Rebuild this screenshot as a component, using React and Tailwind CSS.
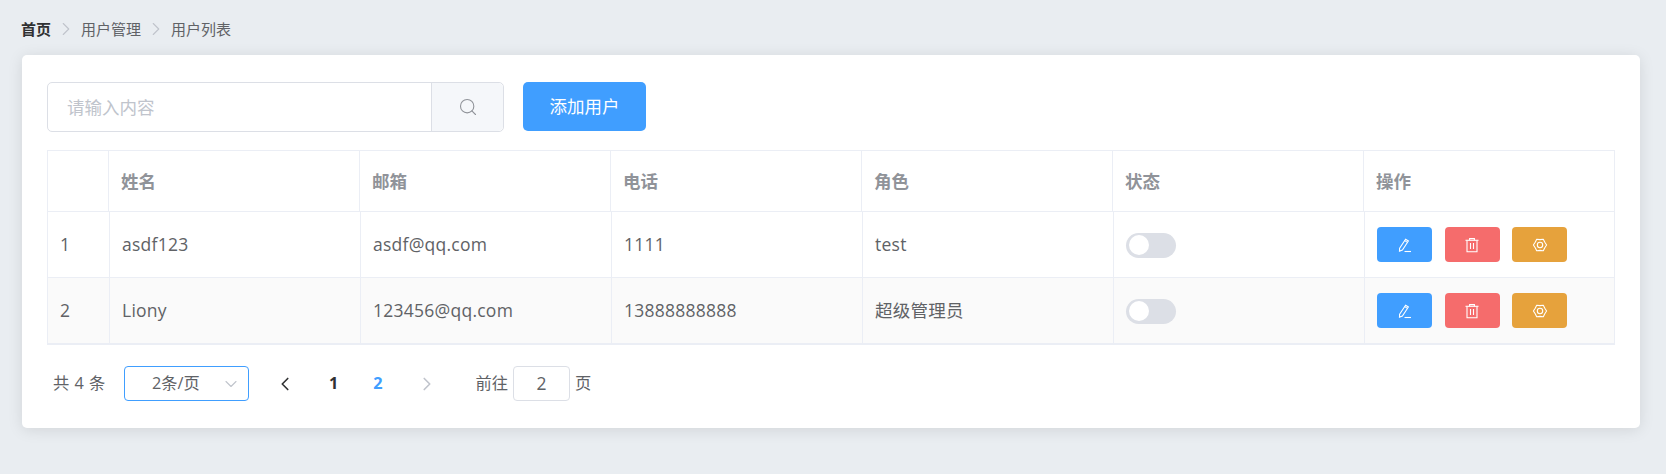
import { ChevronDown, ChevronLeft, ChevronRight, Search } from 'lucide-react'

const columns = ['', '姓名', '邮箱', '电话', '角色', '状态', '操作']

const users = [
  { id: 1, name: 'asdf123', email: 'asdf@qq.com', phone: '1111', role: 'test' },
  { id: 2, name: 'Liony', email: '123456@qq.com', phone: '13888888888', role: '超级管理员' },
]

const EditIcon = () => (
  <svg width="18" height="18" viewBox="0 0 18 18" fill="none" stroke="currentColor" strokeWidth="1.1">
    <path d="M3.6 12.2 9.6 3.2l2.8 1.8-6 9-2.9 1.1z" />
    <path d="M8.7 4.6l2.8 1.8" />
    <path d="M8.5 15.5h6.5" />
  </svg>
)

const TrashIcon = () => (
  <svg width="18" height="18" viewBox="0 0 18 18" fill="none" stroke="currentColor" strokeWidth="1.1">
    <path d="M2.5 4.3h13" />
    <path d="M6.6 4.2V2.6h4.8v1.6" />
    <path d="M4 4.5v11.2h10V4.5" />
    <path d="M7.5 7v6M10.5 7v6" />
  </svg>
)

const GearIcon = () => (
  <svg width="18" height="18" viewBox="0 0 18 18" fill="none" stroke="currentColor" strokeWidth="1.1" strokeLinejoin="round">
    <path d="M15.6 9 13.8 11.7 12.3 14.7 9 14.4 5.7 14.7 4.2 11.7 2.4 9 4.2 6.3 5.7 3.3 9 3.6 12.3 3.3 13.8 6.3z" />
    <circle cx="9" cy="9" r="2.7" />
  </svg>
)

function Switch() {
  return (
    <div className="mt-px flex h-[25px] w-[50px] items-center rounded-full bg-[#dcdfe6] pl-[3px]">
      <span className="h-[20px] w-[20px] rounded-full bg-white" />
    </div>
  )
}

function ActionButton({ color, children }) {
  return (
    <button className={`flex h-[35px] w-[55px] items-center justify-center rounded-[4px] text-white ${color}`}>
      {children}
    </button>
  )
}

function UserRow({ user, striped }) {
  const cell = 'flex w-[251px] items-center border-r border-[#ebeef5] pl-[12px] tracking-[0.25px]'
  return (
    <div className={`flex h-[66px] border-b border-[#ebeef5] text-[17.5px] text-[#606266] ${striped ? 'bg-[#fafafa]' : ''}`}>
      <div className="flex w-[62px] items-center border-r border-[#ebeef5] pl-[12px]">{user.id}</div>
      <div className={cell}>{user.name}</div>
      <div className={cell}>{user.email}</div>
      <div className={cell}>{user.phone}</div>
      <div className={cell}>{user.role}</div>
      <div className={cell}>
        <Switch />
      </div>
      <div className="flex flex-1 items-center gap-[12.5px] pl-[12px]">
        <ActionButton color="bg-[#409eff]">
          <EditIcon />
        </ActionButton>
        <ActionButton color="bg-[#f56c6c]">
          <TrashIcon />
        </ActionButton>
        <ActionButton color="bg-[#e6a23c]">
          <GearIcon />
        </ActionButton>
      </div>
    </div>
  )
}

export default function App() {
  return (
    <div className="h-[474px] bg-[#e9edf1] px-[21px] pt-[20px] font-['Open_Sans','Noto_Sans_CJK_SC',sans-serif]">
      <div className="flex h-[18px] items-center text-[15px] leading-[18px] text-[#606266]">
        <span className="font-bold text-[#303133]">首页</span>
        <ChevronRight className="mx-[4px] h-[22px] w-[22px] text-[#c0c4cc]" strokeWidth={1.2} />
        <span>用户管理</span>
        <ChevronRight className="mx-[4px] h-[22px] w-[22px] text-[#c0c4cc]" strokeWidth={1.2} />
        <span>用户列表</span>
      </div>

      <div className="ml-px mt-[17px] h-[373px] w-[1618px] rounded-[5px] bg-white px-[25px] pt-[27px] shadow-[0_2px_15px_rgba(0,0,0,0.1)]">
        <div className="flex gap-[19px]">
          <div className="flex h-[50px] w-[457px] rounded-[5px] border border-[#dcdfe6] text-[17.5px]">
            <div className="flex flex-1 items-center pl-[19px] text-[#c0c4cc]">请输入内容</div>
            <div className="flex w-[72px] items-center justify-center rounded-r-[5px] border-l border-[#dcdfe6] bg-[#f5f7fa] text-[#909399]">
              <Search className="h-[20px] w-[20px]" strokeWidth={1.3} />
            </div>
          </div>
          <button className="h-[49px] w-[123px] rounded-[5px] bg-[#409eff] text-[17.5px] text-white">添加用户</button>
        </div>

        <div className="mt-[18px] w-[1568px] border-x border-t border-[#ebeef5]">
          <div className="flex h-[61px] border-b border-[#ebeef5] text-[17.5px] font-bold text-[#909399]">
            {columns.map((title, i) => (
              <div
                key={i}
                className={`flex items-center ${i === 0 ? 'w-[61px] border-r border-[#ebeef5]' : i === 6 ? 'flex-1 pl-[12px]' : 'w-[251px] border-r border-[#ebeef5] pl-[12px]'}`}
              >
                {title}
              </div>
            ))}
          </div>
          {users.map((user, i) => (
            <UserRow key={user.id} user={user} striped={i === 1} />
          ))}
          <div className="h-px bg-[#ebeef5]" />
        </div>

        <div className="mt-[21px] flex h-[35px] items-center text-[16.25px] text-[#606266]">
          <span className="ml-[6px] w-[71px] tracking-[0.5px]">共 4 条</span>
          <div className="relative flex h-[35px] w-[125px] items-center rounded-[4px] border border-[#409eff] pl-[27px]">
            2条/页
            <ChevronDown className="absolute right-[7px] h-[20px] w-[20px] text-[#c0c4cc]" strokeWidth={1.3} />
          </div>
          <ChevronLeft className="ml-[25px] h-[22px] w-[22px] text-[#303133]" strokeWidth={1.8} />
          <span className="ml-[33px] font-bold text-[#303133]">1</span>
          <span className="ml-[35px] font-bold text-[#409eff]">2</span>
          <ChevronRight className="ml-[33px] h-[22px] w-[22px] text-[#c0c4cc]" strokeWidth={1.8} />
          <span className="ml-[38px]">前往</span>
          <div className="ml-[5px] flex h-[35px] w-[57px] items-center justify-center rounded-[4px] border border-[#dcdfe6] text-[17.5px]">2</div>
          <span className="ml-[5px]">页</span>
        </div>
      </div>
    </div>
  )
}
